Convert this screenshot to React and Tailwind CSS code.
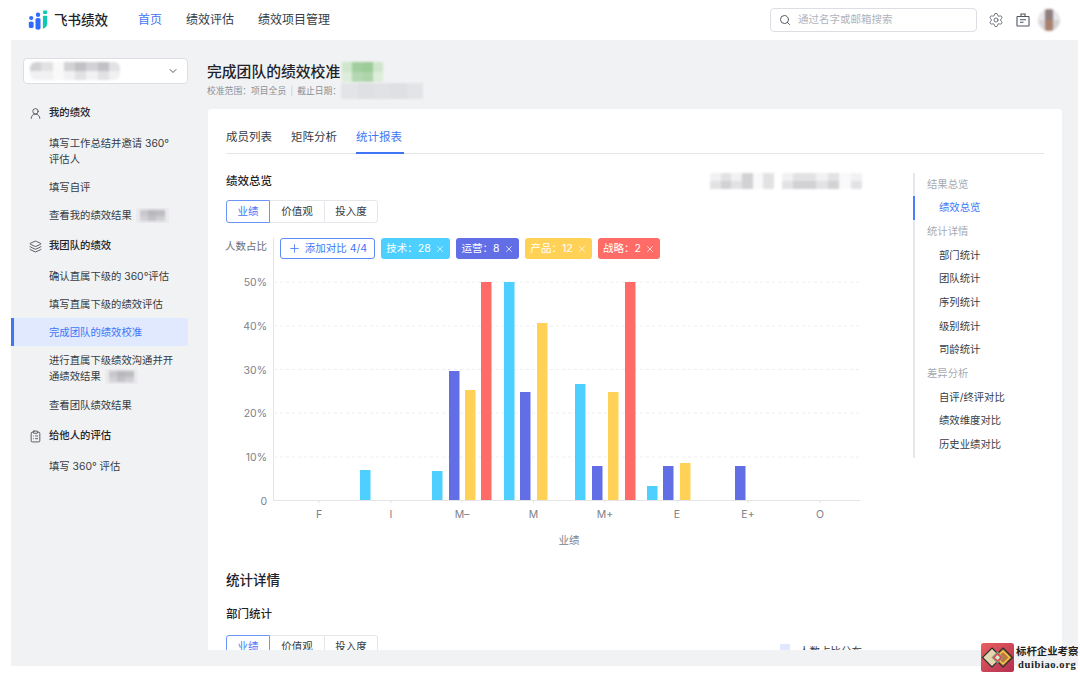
import React from 'react';
import { Search, Settings, ChevronDown, UserRound, Layers, ClipboardList, Plus, X } from 'lucide-react';

const FONT = 'font-[Inter,"Noto_Sans_CJK_SC",sans-serif]';

// pixel mosaics that stand in for the blurred-out names in the screenshot
const Mosaic = ({ cols, cells, className = '' }) => (
  <div
    className={`grid blur-[1px] ${className}`}
    style={{ gridTemplateColumns: `repeat(${cols}, 1fr)` }}
  >
    {cells.map((c, i) => (
      <div key={i} style={{ background: c }} />
    ))}
  </div>
);

const g1 = '#f1f1f3', g2 = '#e2e2e5', g3 = '#d2d2d5', g4 = '#c2c2c6', w = '#f9f9fa';

const Logo = () => (
  <svg width="20" height="20" viewBox="0 0 20 20">
    <circle cx="3.2" cy="8" r="2.1" fill="#2f6bff" />
    <path d="M.8 12.2c1.4-1 3.4-1 4.8 0v4.2c0 1.1-1 1.7-2.4 1.7S.8 17.500.8 16.400z" fill="#2f6bff" />
    <circle cx="10" cy="4.800" r="2.200" fill="#2f6bff" />
    <path d="M7.500 8.700c1.500-.8 3.500-.8 5 0v9.300c0 .9-1.100 1.700-2.500 1.700s-2.500-.8-2.500-1.700z" fill="#2f6bff" />
    <rect x="15" y=".4" width="4.200" height="3.600" rx="1" fill="#12c9b0" />
    <path d="M14.900 6c1.300-.5 3-.5 4.300 0v7.500c0 2.500-1.700 4.500-4.300 5.200z" fill="#12c9b0" />
  </svg>
);

const BadgeIcon = () => (
  <svg width="14" height="14" viewBox="0 0 14 14" fill="none" stroke="#4e5561" strokeWidth="1.100">
    <rect x="1" y="3.500" width="12" height="9.500" rx=".6" />
    <path d="M5 3.500V1h4v2.500M4 6.800h6M4 9.300h3.500" />
  </svg>
);

const Header = () => (
  <header className="h-10 flex items-center bg-white pl-[28px] pr-[20px]">
    <Logo />
    <span className="ml-[6px] text-[13.5px] font-medium text-[#1f2329]">飞书绩效</span>
    <nav className="ml-[30px] flex gap-[24px] text-[12px] text-[#373c43]">
      <span className="text-[#3f76f6]">首页</span>
      <span>绩效评估</span>
      <span>绩效项目管理</span>
    </nav>
    <div className="ml-auto w-[207px] h-[24px] flex items-center gap-[7px] pl-[8px] border border-[#dcdee3] rounded-[4px]">
      <Search size={12} className="text-[#555b66]" />
      <span className="text-[10.5px] text-[#b0b4bb]">通过名字或邮箱搜索</span>
    </div>
    <Settings size={16} strokeWidth={1.200} className="ml-[11px] text-[#4e5561]" />
    <span className="ml-[12px]"><BadgeIcon /></span>
    <Mosaic
      cols={3}
      cells={['#e8e6e8', '#8f7f80', '#e6e6e8', '#d9d6da', '#a8826f', '#d5d0d4']}
      className="ml-[8px] w-[22px] h-[22px] rounded-full overflow-hidden"
    />
  </header>
);

const Tag = () => (
  <span className="inline-flex items-center justify-center w-[33px] h-[15px] align-middle ml-[4px] rounded-[2px] bg-[#ebebee]">
    <Mosaic
      cols={3}
      cells={['#c8c8cc', '#b8b8bd', '#bcbcc1', '#d2d2d6', '#c2c2c7', '#d0d0d4']}
      className="w-[25px] h-[11px]"
    />
  </span>
);

const SideItem = ({ children, active, tall, className = '' }) => (
  <div
    className={`pr-[12px] flex items-center leading-[16px] ${tall ? 'h-[44px]' : 'h-[28px]'} ${
      active
        ? 'pl-[35px] bg-[#e1e9ff] text-[#3f76f6] border-l-[3px] border-[#3f76f6] rounded-r-[3px]'
        : 'pl-[38px]'
    } ${className}`}
  >
    <div>{children}</div>
  </div>
);

const SideGroup = ({ icon: Icon, title }) => (
  <div className="h-[32px] mt-px flex items-center gap-[7px] pl-[18px] text-[#1f2329] font-medium">
    <Icon size={13} strokeWidth={1.500} className="text-[#3b4048]" />
    <span>{title}</span>
  </div>
);

const Sidebar = () => (
  <aside className="w-[177px] shrink-0 pt-[18px] text-[10.35px] text-[#373c43]">
    <div className="ml-[12px] w-[165px] h-[26px] flex items-center justify-between pl-[6px] pr-[8px] bg-white border border-[#dcdee3] rounded-[4px]">
      <Mosaic
        cols={8}
        cells={[g3, g2, w, g3, g4, g3, g4, g2, g1, g1, w, g1, g2, g1, g2, g1]}
        className="w-[90px] h-[18px] rounded-[6px] overflow-hidden"
      />
      <ChevronDown size={12} className="text-[#555b66]" />
    </div>
    <div className="mt-[13px]">
      <SideGroup icon={UserRound} title="我的绩效" />
      <SideItem tall>填写工作总结并邀请 360°<br />评估人</SideItem>
      <SideItem>填写自评</SideItem>
      <SideItem>查看我的绩效结果<Tag /></SideItem>
      <SideGroup icon={Layers} title="我团队的绩效" />
      <SideItem>确认直属下级的 360°评估</SideItem>
      <SideItem>填写直属下级的绩效评估</SideItem>
      <SideItem active>完成团队的绩效校准</SideItem>
      <SideItem tall>进行直属下级绩效沟通并开<br />通绩效结果<Tag /></SideItem>
      <SideItem className="mt-px">查看团队绩效结果</SideItem>
      <SideGroup icon={ClipboardList} title="给他人的评估" />
      <SideItem>填写 360° 评估</SideItem>
    </div>
  </aside>
);

const Segment = () => (
  <div className="flex w-[152px] h-[23px] text-[10.5px] text-[#373c43]">
    <div className="w-[44px] flex items-center justify-center border border-[#6c95f8] rounded-l-[3px] text-[#3f76f6]">业绩</div>
    <div className="w-[54px] flex items-center justify-center border-y border-[#e4e6ea]">价值观</div>
    <div className="w-[54px] flex items-center justify-center border border-[#e4e6ea] rounded-r-[3px]">投入度</div>
  </div>
);

const COLORS = { c: '#4dcfff', i: '#626ee6', y: '#ffd257', r: '#ff6b66' };

const BARS = [
  ['c', 360, 470], ['c', 432, 471], ['i', 449, 371], ['y', 465, 390], ['r', 481, 282],
  ['c', 504, 282], ['i', 520, 392], ['y', 537, 323], ['c', 575, 384], ['i', 592, 466],
  ['y', 608, 392], ['r', 625, 282], ['c', 647, 486], ['i', 663, 466], ['y', 680, 463],
  ['i', 735, 466],
];

const TICKS = [['F', 319], ['I', 391], ['M–', 462], ['M', 533.5], ['M+', 605], ['E', 677], ['E+', 748], ['O', 820]];
const GRID = [['50%', 282], ['40%', 326], ['30%', 369.500], ['20%', 413], ['10%', 457]];

const BarChart = () => (
  // viewBox keeps screenshot x/y so the bars can be read straight off the picture
  <svg width="640" height="320" viewBox="224 232 640 320" className="block">
    <line x1="273.500" y1="238" x2="273.500" y2="500.500" stroke="#e3e5e9" />
    <line x1="273" y1="500.500" x2="860" y2="500.500" stroke="#e3e5e9" />
    <text x="267" y="250" textAnchor="end" fontSize="10.500" fill="#6b7078">人数占比</text>
    {GRID.map(([label, y]) => (
      <g key={label}>
        <line x1="274" y1={y} x2="860" y2={y} stroke="#eceef1" strokeDasharray="3 3" />
        <text x="267" y={y + 4} textAnchor="end" fontSize="10.500" fill="#7d828a">{label}</text>
      </g>
    ))}
    <text x="267" y="505" textAnchor="end" fontSize="10.500" fill="#7d828a">0</text>
    {BARS.map(([c, x, top], i) => (
      <rect key={i} x={x} y={top} width="10.500" height={500 - top} fill={COLORS[c]} />
    ))}
    {TICKS.map(([label, x]) => (
      <g key={label}>
        <line x1={x} y1="501" x2={x} y2="503" stroke="#e3e5e9" />
        <text x={x} y="518" textAnchor="middle" fontSize="10.500" fill="#7d828a">{label}</text>
      </g>
    ))}
    <text x="569" y="544" textAnchor="middle" fontSize="10.500" fill="#7d828a">业绩</text>
  </svg>
);

const FilterTag = ({ color, w: width, children }) => (
  <div className={`h-[21px] flex items-center justify-center gap-[4px] rounded-[3px] text-white text-[10.5px] ${color} ${width}`}>
    <span>{children}</span>
    <X size={10} strokeWidth={1.700} />
  </div>
);

const TocItem = ({ children, head, active }) => (
  <div
    className={`h-[23.7px] flex items-center text-[10.35px] -ml-[2px] border-l-2 ${
      active ? 'border-[#4a7dff] text-[#3f76f6]' : 'border-transparent'
    } ${head ? 'pl-[12px] text-[#a6aab1]' : 'pl-[24px]'} ${!head && !active ? 'text-[#373c43]' : ''}`}
  >
    {children}
  </div>
);

const Toc = () => (
  <div className="ml-[51px] mt-[18.5px] w-[120px] h-[285px] border-l-2 border-[#e5e7ec] pl-0">
    <TocItem head>结果总览</TocItem>
    <TocItem active>绩效总览</TocItem>
    <TocItem head>统计详情</TocItem>
    <TocItem>部门统计</TocItem>
    <TocItem>团队统计</TocItem>
    <TocItem>序列统计</TocItem>
    <TocItem>级别统计</TocItem>
    <TocItem>司龄统计</TocItem>
    <TocItem head>差异分析</TocItem>
    <TocItem>自评/终评对比</TocItem>
    <TocItem>绩效维度对比</TocItem>
    <TocItem>历史业绩对比</TocItem>
  </div>
);

const Card = () => (
  <section className="mt-[10px] h-[541px] overflow-hidden bg-white rounded-t-[3px] pl-[18px] pr-[18px]">
    <div className="h-[45px] flex gap-[19px] border-b border-[#e4e6ea] text-[11.5px] text-[#373c43]">
      <span className="pt-[20px]">成员列表</span>
      <span className="pt-[20px]">矩阵分析</span>
      <span className="pt-[20px] h-[45px] w-[48px] text-[#3f76f6] border-b-2 border-[#3f76f6]">统计报表</span>
    </div>
    <div className="flex">
      <div className="w-[636px] shrink-0">
        <div className="mt-[19px] h-[18px] flex items-center justify-between">
          <h2 className="text-[11.5px] font-medium text-[#1f2329]">绩效总览</h2>
          <div className="flex gap-[8px] -mt-[2px]">
            <Mosaic
              cols={6}
              cells={[g1, g2, g1, g3, w, g2, g2, g3, g2, g3, w, g2]}
              className="w-[64px] h-[16px]"
            />
            <Mosaic
              cols={7}
              cells={[g1, g2, g2, g1, g2, w, g1, g2, g3, g3, g2, g3, w, g2]}
              className="w-[80px] h-[16px]"
            />
          </div>
        </div>
        <div className="mt-[9px]"><Segment /></div>
        <div className="relative mt-[9px] -ml-[2px]">
          <BarChart />
          <div className="absolute left-[56px] top-[6px] flex gap-[6px]">
            <div className="w-[95px] h-[21px] flex items-center justify-center gap-[4px] border border-[#5c8af7] rounded-[3px] text-[10.5px] text-[#3f76f6]">
              <Plus size={13} strokeWidth={1.500} />
              <span>添加对比 4/4</span>
            </div>
            <FilterTag color="bg-[#4dcfff]" w="w-[69px]">技术：28</FilterTag>
            <FilterTag color="bg-[#626ee6]" w="w-[63px]">运营：8</FilterTag>
            <FilterTag color="bg-[#ffd257]" w="w-[67px]">产品：12</FilterTag>
            <FilterTag color="bg-[#ff6b66]" w="w-[62px]">战略：2</FilterTag>
          </div>
        </div>
        <h2 className="mt-[18px] text-[13.5px] leading-[20px] font-medium text-[#1f2329]">统计详情</h2>
        <h3 className="mt-[15px] text-[11.5px] leading-[18px] font-medium text-[#1f2329]">部门统计</h3>
        <div className="mt-[12px] flex justify-between">
          <Segment />
          <div className="flex items-start gap-[9px] pt-[9px] w-[82px] text-[10.5px] text-[#373c43]">
            <div className="w-[10px] h-[10px] shrink-0 bg-[#e1e7ff]" />
            <span className="whitespace-nowrap">人数占比分布</span>
          </div>
        </div>
      </div>
      <Toc />
    </div>
  </section>
);

const Watermark = () => (
  <div className="absolute left-[981px] top-[643px] flex items-center gap-[2px]">
    <svg width="33" height="29" viewBox="0 0 33 29">
      <defs>
        <linearGradient id="wm" x1="0" y1="0" x2="1" y2="1">
          <stop offset="0" stopColor="#e8605f" />
          <stop offset="1" stopColor="#b32f52" />
        </linearGradient>
      </defs>
      <rect width="33" height="29" rx="2.500" fill="url(#wm)" />
      <path d="M11 5l9.500 9.500L11 24 1.500 14.500z" fill="#e4d6b0" stroke="#24302c" strokeWidth="1.200" />
      <path d="M22 5l9.500 9.500L22 24l-9.500-9.500z" fill="#c2773f" stroke="#24302c" strokeWidth="1.200" />
      <path d="M22 8l6.500 6.500L22 21l-6.500-6.500z" fill="none" stroke="#f5d44d" strokeWidth="1.200" />
      <path d="M16.500 9l5.500 5.500-5.500 5.500-5.500-5.500z" fill="#d9505a" stroke="#6fb78c" />
      <path d="M16.500 12l2.500 2.500-2.500 2.500-2.500-2.500z" fill="#d8f0c8" />
    </svg>
    <div className="font-['Liberation_Serif','Noto_Sans_CJK_SC',serif] font-bold text-[#222] text-center">
      <div className="text-[10.4px] leading-[13px] whitespace-nowrap font-['Noto_Sans_CJK_SC',serif]">标杆企业考察</div>
      <div className="text-[10.5px] leading-[14px] tracking-[0.6px] mt-px">duibiao.org</div>
    </div>
  </div>
);

export default function App() {
  return (
    <div className={`relative w-[1080px] h-[674px] overflow-hidden bg-white ${FONT}`}>
      <Header />
      <div className="ml-[11px] w-[1067px] h-[626px] flex bg-[#f1f2f4]">
        <Sidebar />
        <main className="ml-[20px] w-[854px]">
          <div className="h-[59px] pt-[22px] -ml-px">
            <div className="flex items-center h-[20px]">
              <h1 className="text-[14.8px] font-medium text-[#1f2329]">完成团队的绩效校准</h1>
              <Mosaic
                cols={4}
                cells={['#cfe6cc', '#a0cf9d', '#9ccc99', '#cfe6cc', '#dcedd9', '#b4d8b1', '#aed4ab', '#dcedd9']}
                className="ml-[2px] w-[41px] h-[20px] rounded-[4px]"
              />
            </div>
            <div className="mt-[1px] flex items-center text-[8.8px] text-[#8a8f97]">
              <span>校准范围：项目全员</span>
              <span className="mx-[4px] text-[#c9ccd1]">|</span>
              <span>截止日期：</span>
              <Mosaic
                cols={5}
                cells={['#e3e4e7', '#dfe0e3', '#e1e2e5', '#dfe0e3', '#e3e4e7']}
                className="w-[82px] h-[16px] rounded-[4px]"
              />
            </div>
          </div>
          <Card />
        </main>
      </div>
      <Watermark />
    </div>
  );
}
